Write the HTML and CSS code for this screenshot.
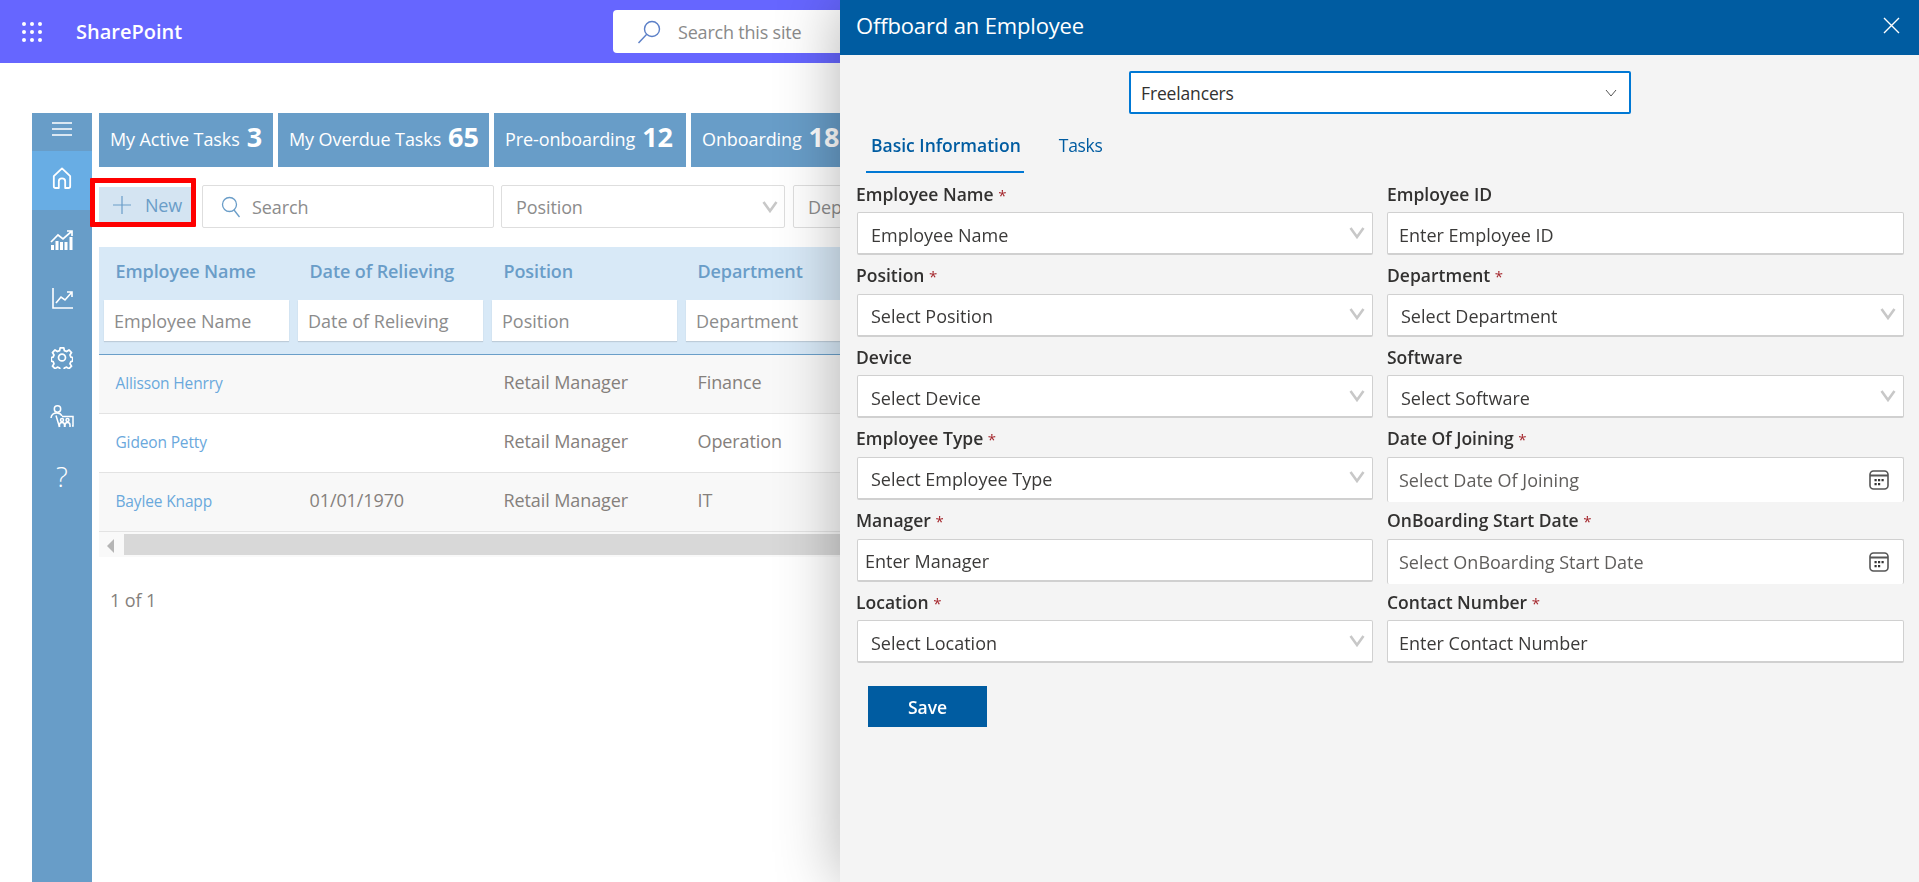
FILE: index.html
```html
<!DOCTYPE html>
<html lang="en">
<head>
  <meta charset="UTF-8"/>
  <meta name="viewport" content="width=device-width,initial-scale=1.0"/>
  <title>Offboard an Employee</title>
  <link rel="stylesheet" href="styles.css">
</head>
<body>

<svg class="sprite" width="0" height="0">
  <symbol id="chev" viewBox="0 0 16 12"><path d="M1.500 1 8 10l6.500-9" fill="none" stroke="#c8c8c8" stroke-width="2.600"/></symbol>
  <symbol id="cal" viewBox="0 0 20 20">
    <rect x="1" y="1" width="18" height="18" rx="3.500" fill="none" stroke="#555" stroke-width="1.600"/>
    <path d="M1 5.500h18" stroke="#555" stroke-width="2"/>
    <path d="M5.500 9h2.200v2.200H5.500zM9 9h2.200v2.200H9zM12.500 9h2.200v2.200h-2.200zM5.500 13h2.200v2.200H5.500zM9 13h2.200v2.200H9z" fill="#333"/>
  </symbol>
</svg>

<header class="topbar">
  <svg class="waffle" width="22" height="22" viewBox="0 0 22 22" fill="#fff">
    <circle cx="3" cy="3" r="2"/><circle cx="11" cy="3" r="2"/><circle cx="19" cy="3" r="2"/>
    <circle cx="3" cy="11" r="2"/><circle cx="11" cy="11" r="2"/><circle cx="19" cy="11" r="2"/>
    <circle cx="3" cy="19" r="2"/><circle cx="11" cy="19" r="2"/><circle cx="19" cy="19" r="2"/>
  </svg>
  <span class="brand">SharePoint</span>
  <div class="site-search">
    <svg width="24" height="24" viewBox="0 0 24 24" fill="none" stroke="#5b7fc7" stroke-width="1.400">
      <circle cx="15" cy="9" r="7.500"/><path d="M9.500 14.500 1.500 23"/>
    </svg>
    <span>Search this site</span>
  </div>
</header>

<div class="app">
  <nav class="sidenav">
    <div class="nav-toggle">
      <svg width="20" height="14" viewBox="0 0 20 14" stroke="#fff" stroke-width="1.600"><path d="M0 1h20M0 7h20M0 13h20"/></svg>
    </div>
    <a class="nav-item active">
      <svg class="home-icon" width="20" height="22" viewBox="0 0 22 24" fill="none" stroke="#fff" stroke-width="2" stroke-linejoin="round">
        <path d="M11 1.500 2 10v11q0 2 2 2h3.500v-7.500q0-3 3.500-3t3.500 3V23H18q2 0 2-2V10z"/>
      </svg>
    </a>
    <a class="nav-item">
      <svg width="24" height="20" viewBox="0 0 24 20" fill="none" stroke="#fff" stroke-width="1.700">
        <path d="M1 12 8 5l5 4 9-8M17 1h5v5"/>
        <path d="M2.500 20v-5M7 20v-9M11.500 20v-8M16 20v-8M21 20V7" stroke-width="3"/>
      </svg>
    </a>
    <a class="nav-item">
      <svg width="21" height="21" viewBox="0 0 21 21" fill="none" stroke="#fff" stroke-width="1.600">
        <path d="M1 0v20h20M4 15l5-6 4 3 7-8M15 4h5v5"/>
      </svg>
    </a>
    <a class="nav-item">
      <svg width="22" height="23" viewBox="0 0 24 24" fill="none" stroke="#fff" stroke-width="1.900" stroke-linejoin="round">
        <path d="M10 1.500h4l.6 3 2.400 1 2.600-1.700 2.800 2.800-1.700 2.600 1 2.400 2 .4v4l-2 .4-1 2.400 1.700 2.600-2.800 2.800-2.600-1.700-2.400 1-.6 2h-4l-.6-2-2.400-1-2.600 1.700-2.800-2.800 1.700-2.600-1-2.400-2-.4v-4l2-.4 1-2.400-1.700-2.600 2.800-2.800 2.600 1.700 2.400-1z"/>
        <circle cx="12" cy="12" r="3.800"/>
      </svg>
    </a>
    <a class="nav-item">
      <svg width="24" height="23" viewBox="0 0 24 23" fill="none" stroke="#fff" stroke-width="1.500">
        <circle cx="7.500" cy="4" r="3.200"/>
        <path d="M1 13q.5-5 6-5 3.500 0 5 3M6 10.500 9.500 22"/>
        <path d="M12 11.500h11V21H22"/>
        <path d="M9.500 22v-2q0-2.500 2.500-2.500t2.500 2.500v2M15 22v-2q0-2.500 2.500-2.500T20 20v2"/>
        <circle cx="12" cy="15" r="1.500"/><circle cx="17.500" cy="15" r="1.500"/>
      </svg>
    </a>
    <a class="nav-item help">?</a>
  </nav>

  <main class="content">
    <div class="tiles">
      <div class="tile tile-active">My Active Tasks <b>3</b></div>
      <div class="tile tile-overdue">My Overdue Tasks <b>65</b></div>
      <div class="tile tile-pre">Pre-onboarding <b>12</b></div>
      <div class="tile">Onboarding <b>18</b></div>
    </div>

    <div class="toolbar">
      <button class="new-btn">
        <svg width="18" height="18" viewBox="0 0 18 18" stroke="#6a9dc8" stroke-width="1.200"><path d="M9 0v18M0 9h18"/></svg>
        New
      </button>
      <div class="filter-box search-box">
        <svg width="20" height="22" viewBox="0 0 20 22" fill="none" stroke="#6a9dc8" stroke-width="1.300">
          <circle cx="8.500" cy="8.500" r="7"/><path d="m13 14 5.500 7"/>
        </svg>
        <span>Search</span>
      </div>
      <div class="filter-box drop-box">
        <span>Position</span>
        <svg width="16" height="12"><use href="#chev"/></svg>
      </div>
      <div class="filter-box drop-box">
        <span>Department</span>
      </div>
    </div>

    <table class="grid">
      <thead>
        <tr class="head-row">
          <th>Employee Name</th>
          <th>Date of Relieving</th>
          <th>Position</th>
          <th>Department</th>
        </tr>
        <tr class="filter-row">
          <td><div class="col-filter">Employee Name</div></td>
          <td><div class="col-filter">Date of Relieving</div></td>
          <td><div class="col-filter">Position</div></td>
          <td><div class="col-filter">Department</div></td>
        </tr>
      </thead>
      <tbody>
        <tr>
          <td><a class="emp-link">Allisson Henrry</a></td>
          <td></td>
          <td>Retail Manager</td>
          <td>Finance</td>
        </tr>
        <tr>
          <td><a class="emp-link">Gideon Petty</a></td>
          <td></td>
          <td>Retail Manager</td>
          <td>Operation</td>
        </tr>
        <tr>
          <td><a class="emp-link">Baylee Knapp</a></td>
          <td>01/01/1970</td>
          <td>Retail Manager</td>
          <td>IT</td>
        </tr>
      </tbody>
    </table>

    <div class="hscroll">
      <span class="hscroll-arrow"></span>
      <div class="hscroll-thumb"></div>
    </div>

    <div class="pager">1 of 1</div>
  </main>
</div>

<aside class="panel">
  <div class="panel-head">
    <h1>Offboard an Employee</h1>
    <svg width="17" height="17" viewBox="0 0 17 17" stroke="#fff" stroke-width="1.400"><path d="m1 1 15 15M16 1 1 16"/></svg>
  </div>

  <div class="type-row">
    <div class="type-select">
      <span>Freelancers</span>
      <svg width="12" height="8" viewBox="0 0 12 8" fill="none" stroke="#555" stroke-width="1"><path d="m1 1 5 6 5-6"/></svg>
    </div>
  </div>

  <div class="tabs">
    <a class="tab active">Basic Information</a>
    <a class="tab">Tasks</a>
  </div>

  <form class="form-grid">
    <div class="field">
      <label>Employee Name <i>*</i></label>
      <div class="control select"><span>Employee Name</span><svg width="16" height="12"><use href="#chev"/></svg></div>
    </div>
    <div class="field">
      <label>Employee ID</label>
      <div class="control text"><span>Enter Employee ID</span></div>
    </div>
    <div class="field">
      <label>Position <i>*</i></label>
      <div class="control select"><span>Select Position</span><svg width="16" height="12"><use href="#chev"/></svg></div>
    </div>
    <div class="field">
      <label>Department <i>*</i></label>
      <div class="control select"><span>Select Department</span><svg width="16" height="12"><use href="#chev"/></svg></div>
    </div>
    <div class="field">
      <label>Device</label>
      <div class="control select"><span>Select Device</span><svg width="16" height="12"><use href="#chev"/></svg></div>
    </div>
    <div class="field">
      <label>Software</label>
      <div class="control select"><span>Select Software</span><svg width="16" height="12"><use href="#chev"/></svg></div>
    </div>
    <div class="field">
      <label>Employee Type <i>*</i></label>
      <div class="control select"><span>Select Employee Type</span><svg width="16" height="12"><use href="#chev"/></svg></div>
    </div>
    <div class="field">
      <label>Date Of Joining <i>*</i></label>
      <div class="control date"><span>Select Date Of Joining</span><svg width="20" height="20"><use href="#cal"/></svg></div>
    </div>
    <div class="field">
      <label>Manager <i>*</i></label>
      <div class="control text manager"><span>Enter Manager</span></div>
    </div>
    <div class="field">
      <label>OnBoarding Start Date <i>*</i></label>
      <div class="control date"><span>Select OnBoarding Start Date</span><svg width="20" height="20"><use href="#cal"/></svg></div>
    </div>
    <div class="field">
      <label>Location <i>*</i></label>
      <div class="control select"><span>Select Location</span><svg width="16" height="12"><use href="#chev"/></svg></div>
    </div>
    <div class="field">
      <label>Contact Number <i>*</i></label>
      <div class="control text"><span>Enter Contact Number</span></div>
    </div>
  </form>

  <button class="save-btn">Save</button>
</aside>

</body>
</html>
```

FILE: styles.css
```css
* {
  margin: 0;
  padding: 0;
  box-sizing: border-box;
}

html, body {
  height: 100%;
  overflow: hidden;
}

body {
  font-family: "Open Sans", "Noto Sans", sans-serif;
  background: #fff;
  color: #323130;
}

.sprite {
  position: absolute;
}

/* top bar */
.topbar {
  height: 63px;
  background: #6666ff;
  display: flex;
  align-items: center;
  padding-left: 21px;
}

.waffle {
  flex: none;
}

.brand {
  margin-left: 33px;
  width: 537px;
  color: #fff;
  font-size: 20px;
  font-weight: 600;
}

.site-search {
  width: 500px;
  height: 43px;
  background: #fff;
  border-radius: 4px;
  display: flex;
  align-items: center;
  padding-left: 24px;
  color: #8a8a8a;
  font-size: 18px;
  letter-spacing: -0.2px;
}

.site-search span {
  margin-left: 17px;
}

/* left app */
.app {
  display: flex;
  padding: 50px 0 0 32px;
  height: 819px;
}

.sidenav {
  width: 60px;
  flex: none;
  background: #689dc8;
}

.nav-toggle {
  height: 38px;
  display: flex;
  align-items: center;
  justify-content: center;
  padding-bottom: 6px;
}

.nav-item {
  height: 59px;
  display: flex;
  align-items: center;
  justify-content: center;
  color: #fff;
}

.nav-item.active {
  background: #68ade4;
}

.home-icon {
  margin-bottom: 5px;
}

.help {
  font-size: 28px;
  font-weight: 300;
}

.content {
  flex: none;
  width: 1700px;
  margin-left: 7px;
}

.tiles {
  display: flex;
  gap: 5px;
}

.tile {
  height: 54px;
  background: #689dc8;
  color: #fff;
  font-size: 18px;
  letter-spacing: -0.1px;
  padding: 0 11px 2px;
  display: flex;
  align-items: center;
  gap: 7px;
  white-space: nowrap;
}

.tile-active {
  width: 174px;
}

.tile-overdue {
  width: 211px;
}

.tile-pre {
  width: 192px;
}

.tile b {
  font-size: 27px;
  font-weight: 700;
  letter-spacing: 0;
  margin-top: -5px;
}

.toolbar {
  display: flex;
  align-items: flex-start;
  padding-top: 18px;
  height: 80px;
}

.new-btn {
  position: relative;
  width: 92px;
  height: 35px;
  margin-top: 2px;
  background: #d4e4f2;
  border: none;
  color: #6a9dc8;
  font: inherit;
  font-size: 18px;
  letter-spacing: -0.2px;
  display: flex;
  align-items: center;
  padding-left: 14px;
  gap: 14px;
}

/* red callout drawn over the button */
.new-btn::after {
  content: "";
  position: absolute;
  top: -9px;
  left: -9px;
  right: -5px;
  bottom: -5px;
  border: 5px solid #fe0000;
  border-radius: 1px;
}

.filter-box {
  height: 43px;
  background: #fff;
  border: 1px solid #dedede;
  border-radius: 2px;
  display: flex;
  align-items: center;
  color: #8c8c8c;
  font-size: 18px;
  letter-spacing: -0.1px;
}

.search-box {
  width: 292px;
  margin-left: 11px;
  padding-left: 18px;
  gap: 11px;
}

.drop-box {
  width: 284px;
  margin-left: 7px;
  padding: 0 6px 0 14px;
  justify-content: space-between;
}

.drop-box + .drop-box {
  margin-left: 8px;
}

.grid {
  border-collapse: collapse;
  table-layout: fixed;
  width: 776px;
}

.grid th, .grid td {
  text-align: left;
  padding: 0;
  width: 194px;
}

.head-row th {
  height: 53px;
  background: #d8e9f7;
  color: #6a9dc8;
  font-size: 18px;
  font-weight: 600;
  letter-spacing: -0.1px;
  padding: 0 0 5px 16.5px;
  white-space: nowrap;
}

.filter-row td {
  height: 54px;
  background: #d8e9f7;
  border-bottom: 1px solid #6a9fc9;
  vertical-align: top;
  padding: 0 4px 0 5px;
}

.col-filter {
  height: 41px;
  background: #fff;
  box-shadow: 0 1px 1px rgba(0, 0, 0, 0.12);
  color: #8c8c8c;
  font-size: 18px;
  padding-left: 10px;
  line-height: 42px;
  white-space: nowrap;
  overflow: hidden;
}

.grid tbody td {
  height: 59px;
  padding: 0 0 4px 16.5px;
  border-bottom: 1px solid #e3e3e3;
  color: #85807c;
  font-size: 18px;
  letter-spacing: -0.1px;
  white-space: nowrap;
}

.grid tbody tr:nth-child(odd) td {
  background: #f8f8f8;
}

.emp-link {
  color: #6aa8dc;
  font-size: 15.5px;
  letter-spacing: -0.15px;
}

.hscroll {
  width: 1700px;
  height: 25px;
  background: #f9f9f9;
  padding: 2px 0 2px 25px;
  position: relative;
}

.hscroll-thumb {
  height: 21px;
  background: #d8d8d8;
}

.hscroll-arrow {
  position: absolute;
  left: 8px;
  top: 7px;
  border: 6px solid transparent;
  border-left: none;
  border-right: 7px solid #b5b5b5;
  border-top-width: 7px;
  border-bottom-width: 7px;
}

.pager {
  margin: 31px 0 0 11px;
  color: #85807c;
  font-size: 18px;
  letter-spacing: -0.1px;
}

/* side panel */
.panel {
  position: fixed;
  top: 0;
  right: 0;
  bottom: 0;
  width: 1079px;
  background: #f4f4f4;
  box-shadow: 0 0 60px rgba(0, 0, 0, 0.3);
}

.panel-head {
  height: 55px;
  background: #005ca1;
  color: #fff;
  display: flex;
  align-items: center;
  justify-content: space-between;
  padding: 0 19px 5px 16px;
}

.panel-head h1 {
  font-size: 22px;
  font-weight: 400;
  letter-spacing: -0.15px;
}

.type-row {
  display: flex;
  padding: 16px 0 0 289px;
}

.type-select {
  width: 502px;
  height: 43px;
  background: #fff;
  border: 2px solid #0078d4;
  border-radius: 2px;
  display: flex;
  align-items: center;
  justify-content: space-between;
  padding: 0 12px 0 10px;
  font-size: 17.5px;
  letter-spacing: -0.15px;
}

.tabs {
  display: flex;
  padding-left: 26px;
  gap: 30px;
  height: 59.6px;
}

.tab {
  height: 59px;
  padding: 0 3px 0 5px;
  color: #005ca1;
  font-size: 17.5px;
  letter-spacing: -0.3px;
  line-height: 62px;
}

.tab.active {
  font-weight: 600;
  border-bottom: 2px solid #0078d4;
  letter-spacing: 0;
}

.form-grid {
  display: grid;
  grid-template-columns: 516px 517px;
  column-gap: 14px;
  padding-left: 17px;
}

.field label {
  display: block;
  height: 38.6px;
  padding-top: 8px;
  margin-left: -1px;
  line-height: 24px;
  font-size: 17.5px;
  font-weight: 600;
  white-space: nowrap;
}

.field:nth-child(even) label {
  margin-left: 0;
}

.field i {
  color: #a4262c;
  font-style: normal;
  font-weight: 400;
  font-size: 15px;
}

.control {
  height: 43px;
  background: #fff;
  border: 1px solid #d0d0d0;
  border-bottom-width: 2px;
  border-radius: 2px;
  display: flex;
  align-items: center;
  font-size: 18px;
  color: #3b3a39;
  white-space: nowrap;
}

.select {
  justify-content: space-between;
  padding: 0 7px 0 13px;
}

.select span {
  padding-top: 3px;
}

.select svg {
  margin-bottom: 1px;
}

.text {
  padding: 3px 0 0 11px;
}

.manager {
  padding-left: 7px;
}

.date {
  justify-content: space-between;
  padding: 0 14px 0 11px;
  border-bottom: none;
  color: #605e5c;
  height: 45px;
  margin-bottom: -2px;
}

.save-btn {
  display: block;
  margin: 23px 0 0 28px;
  width: 119px;
  height: 41px;
  background: #005ca1;
  border: none;
  color: #fff;
  font: inherit;
  font-size: 17.5px;
  font-weight: 600;
}
```
